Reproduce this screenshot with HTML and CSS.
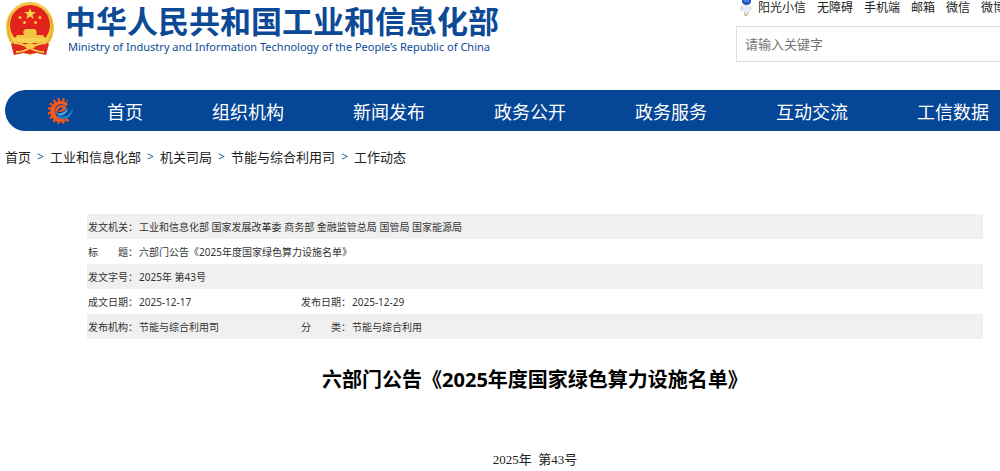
FILE: index.html
```html
<!DOCTYPE html>
<html lang="zh-CN">
<head>
<meta charset="utf-8">
<title>六部门公告《2025年度国家绿色算力设施名单》</title>
<link rel="stylesheet" href="styles.css">
</head>
<body>
<header class="header">
  <a class="brand" href="#">
    <svg class="emblem" viewBox="0 0 50 54" aria-hidden="true">
      <path d="M25 0C38 0 49 11 49 25c0 7-2 13-6 18l-2 9-10-1-6 2-6-2-10 1-2-9C3 38 1 32 1 25 1 11 12 0 25 0z" fill="#f3c743"/>
      <path d="M4 18q-4 14 6 26M46 18q4 14-6 26M8 11q-5 5-5 10M42 11q5 5 5 10" fill="none" stroke="#dd9d2c" stroke-width="1"/>
      <circle cx="25" cy="23" r="20" fill="#e2231c"/>
      <path d="M25 6l1.500 4h4.400l-3.500 2.700 1.300 4.300-3.700-2.600-3.700 2.600 1.300-4.300-3.500-2.700h4.400z" fill="#f8d348"/>
      <g fill="#f5c440"><circle cx="15" cy="15.500" r="1.500"/><circle cx="35" cy="15.500" r="1.500"/><circle cx="19.500" cy="20.500" r="1.500"/><circle cx="30.500" cy="20.500" r="1.500"/></g>
      <path d="M18 30l2-3h10l2 3-1 3h7l2 3H10l2-3h7z" fill="#f5c440"/>
      <path d="M7 36h36l-4 5H11z" fill="#f7d250"/>
      <path d="M6 42c6-3 11-2 14 1h10c3-3 8-4 14-1l-3 11-9-2-7 1-7-1-9 2z" fill="#df2b1d"/>
      <path d="M9 41c6 0 11 2 16 5 5-3 10-5 16-5M11 50c6 0 9-1 14-4 5 3 8 4 14 4" fill="none" stroke="#f7cf4d" stroke-width="1.800"/>
      <ellipse cx="25" cy="44" rx="5" ry="3" fill="#f6cb45"/>
    </svg>
    <span class="brand-text">
      <strong class="brand-name">中华人民共和国工业和信息化部</strong>
      <span class="brand-en">Ministry of Industry and Information Technology of the People’s Republic of China</span>
    </span>
  </a>
  <div class="tools">
    <div class="links">
      <svg class="robot" viewBox="0 0 14 18" aria-hidden="true">
        <path d="M3 6L1 11l2 1 2-3zM11 6l2 4-2 1-2-2z" fill="#d7dbe4"/>
        <rect x="4" y="5" width="7" height="9" rx="3" fill="#e9edf4"/>
        <path d="M3 0h9v3q-1 3-4.500 3T3 3z" fill="#2354c4"/>
        <path d="M5 1h5v2H5z" fill="#4b7be0"/>
        <path d="M5 13h2v4H5zM8 13h2v3H8z" fill="#cfd0cf"/>
        <path d="M6 15h2v2H6z" fill="#e3b55c"/>
      </svg>
      <a href="#">阳光小信</a>
      <a href="#">无障碍</a>
      <a href="#">手机端</a>
      <a href="#">邮箱</a>
      <a href="#">微信</a>
      <a href="#">微博</a>
    </div>
    <input class="search" type="text" aria-label="请输入关键字" placeholder="请输入关键字">
  </div>
</header>
<nav class="nav" aria-label="主导航">
  <svg class="gear" viewBox="0 0 28 28" aria-hidden="true">
    <path d="M22 22A11 11 0 1 1 21 5" fill="none" stroke="#e9531d" stroke-width="4" stroke-dasharray="2.400 2"/>
    <path d="M22 22A10.500 10.500 0 1 1 22 7l-2 2c-5-4-12-1-11 6 1 6 7 8 13 7z" fill="#ee5a20"/>
    <path d="M10 17c-2-5 1-9 6-9 4 0 5 3 3 5-2 2-5 2-7 2 1-2 4-2 5-4-3-1-6 1-6 5z" fill="#ee5a20"/>
    <path d="M11 16c3 1 7 0 9-3 1-1 1-2 0-3 3 2 1 6-3 8-2 1-5 1-6-2z" fill="#58a9df"/>
    <path d="M11 18c7 4 13 0 16-7 0 7-5 11-10 11-3 0-5-1-6-4z" fill="#1f83cf"/>
  </svg>
  <a href="#">首页</a>
  <a href="#">组织机构</a>
  <a href="#">新闻发布</a>
  <a href="#">政务公开</a>
  <a href="#">政务服务</a>
  <a href="#">互动交流</a>
  <a href="#">工信数据</a>
</nav>
<nav class="crumbs" aria-label="当前位置">
  <a href="#">首页</a><span class="sep">&gt;</span><a href="#">工业和信息化部</a><span class="sep">&gt;</span><a href="#">机关司局</a><span class="sep">&gt;</span><a href="#">节能与综合利用司</a><span class="sep">&gt;</span><a href="#">工作动态</a>
</nav>
<main class="article">
  <table class="meta">
    <colgroup><col class="c-label"><col class="c-value"><col class="c-label"><col></colgroup>
    <tr><th scope="row">发文机关：</th><td colspan="3">工业和信息化部 国家发展改革委 商务部 金融监管总局 国管局 国家能源局</td></tr>
    <tr><th scope="row">标　　题：</th><td colspan="3">六部门公告《2025年度国家绿色算力设施名单》</td></tr>
    <tr><th scope="row">发文字号：</th><td colspan="3">2025年 第43号</td></tr>
    <tr><th scope="row">成文日期：</th><td>2025-12-17</td><th scope="row">发布日期：</th><td>2025-12-29</td></tr>
    <tr><th scope="row">发布机构：</th><td>节能与综合利用司</td><th scope="row">分　　类：</th><td>节能与综合利用</td></tr>
  </table>
  <h1 class="title">六部门公告《2025年度国家绿色算力设施名单》</h1>
  <p class="number">2025年&nbsp; 第43号</p>
</main>
</body>
</html>
```
FILE: styles.css
```css
* { box-sizing: border-box; }
body {
  margin: 0;
  background: #fff;
  color: #222;
  font-family: "Noto Sans", "Noto Sans CJK SC", sans-serif;
  overflow-x: hidden;
}
a { color: inherit; text-decoration: none; white-space: nowrap; }

.header { display: flex; height: 90px; padding-left: 5px; overflow: hidden; }
.brand { display: flex; flex: none; gap: 10px; color: #0d4a96; }
.emblem { width: 50px; height: 54px; margin-top: 2px; }
.brand-text { display: flex; flex-direction: column; padding-top: 3px; }
.brand-name { font-size: 31px; line-height: 36px; font-weight: 700; }
.brand-en { padding-left: 3px; font-size: 11px; line-height: 16px; font-weight: 400; }

.tools { flex: 1; min-width: 264px; margin-left: auto; max-width: 264px; }
.links { display: flex; align-items: center; gap: 11px; height: 15px; font-size: 12px; line-height: 15px; }
.links a { flex: none; }
.robot { flex: none; width: 14px; height: 18px; margin: 0 -6px 0 3px; }
.search {
  display: block;
  width: calc(100% + 8px);
  height: 36px;
  margin-top: 11px;
  padding: 0 8px;
  border: 1px solid #ddd;
  font: inherit;
  font-size: 13px;
}
.search::placeholder { color: #757575; }

.nav {
  display: flex;
  align-items: center;
  gap: 69px;
  height: 41px;
  margin: 0 -24px 0 5px;
  padding-left: 41px;
  border-radius: 21px;
  background: #054696;
  color: #fff;
  font-size: 18px;
}
.gear { flex: none; width: 28px; height: 28px; margin-right: -36px; }

.crumbs { display: flex; padding: 16px 5px; font-size: 13px; line-height: 20px; }
.sep { width: 19px; text-align: center; color: #1b5f94; font-size: 12px; }

.article { padding: 31px 17px 0 87px; }
.meta {
  width: 100%;
  border-collapse: collapse;
  table-layout: fixed;
  color: #333;
  font-size: 10px;
  line-height: 24px;
}
.meta .c-label { width: 51px; }
.meta .c-value { width: 162px; }
.meta th, .meta td { height: 25px; padding: 0 0 0 1px; font-weight: 400; text-align: left; white-space: nowrap; }
.meta tr:nth-child(odd) { background: #f0f0f0; }

.title {
  margin: 27px 0 0;
  color: #000;
  font-size: 20px;
  line-height: 28px;
  text-align: center;
}
.number {
  margin: 56px 0 0;
  font-family: "Liberation Serif", "Noto Sans CJK SC", serif;
  font-size: 13px;
  line-height: 20px;
  text-align: center;
}
```
